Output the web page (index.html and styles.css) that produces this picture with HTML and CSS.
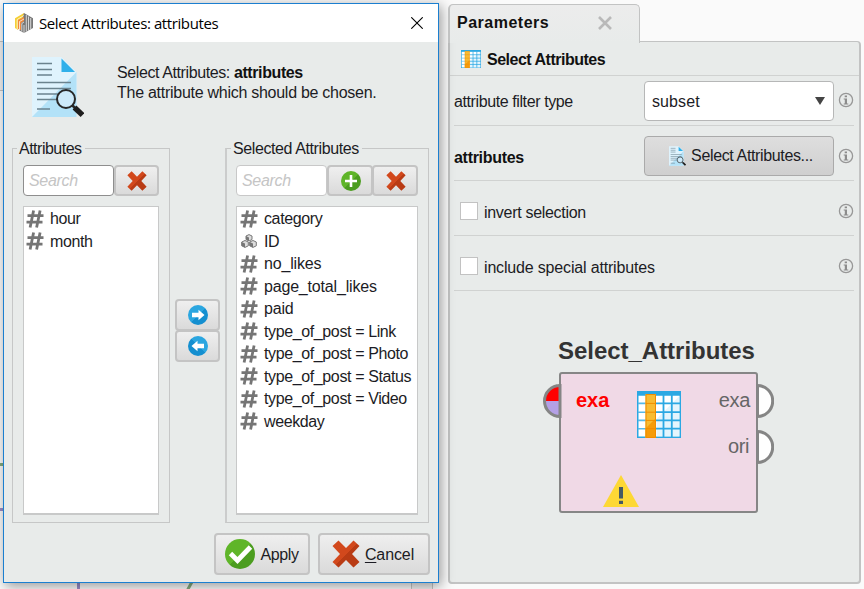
FILE: index.html
```html
<!DOCTYPE html>
<html lang="en">
<head>
<meta charset="utf-8">
<title>Select Attributes</title>
<link rel="stylesheet" href="styles.css">
</head>
<body>
<svg class="defs" width="0" height="0">
  <defs>
    <linearGradient id="red" x1="0" y1="0" x2="1" y2="1"><stop offset=".5" stop-color="#d2481c"/><stop offset=".5" stop-color="#b93b14"/></linearGradient>
    <linearGradient id="green" x1="0" y1="0" x2="1" y2="1"><stop offset=".5" stop-color="#5fb529"/><stop offset=".5" stop-color="#4c9d20"/></linearGradient>
    <linearGradient id="blue" x1="0" y1="0" x2="1" y2="1"><stop offset=".5" stop-color="#2ba6e0"/><stop offset=".5" stop-color="#148fd0"/></linearGradient>
  </defs>
  <symbol id="cross" viewBox="0 0 28 28"><path fill="url(#red)" d="M6.500 .5 14 8 21.500 .5 27.500 6 20 14 27.500 22 21.500 27.500 14 20 6.500 27.500 .5 22 8 14 .5 6Z"/></symbol>
  <symbol id="hash" viewBox="0 0 18 18"><path fill="none" stroke="#757575" stroke-width="2.800" d="M7.600 .5 4.100 17.500M14.100 .5 10.600 17.500M1.500 5.700H17.500M.5 12.200H16.500"/></symbol>
  <symbol id="cubes" viewBox="0 0 16 14"><g fill="#ddd" stroke="#777" stroke-width="1"><path d="M8 .6 11 2v3.500L8 7 5 5.500V2Z"/><path d="M4 6.500 7.300 8v3.800L4 13.400.7 11.800V8Z"/><path d="M12 6.500 15.300 8v3.800L12 13.400 8.700 11.800V8Z"/></g><path fill="#777" d="M5 2 8 3.500V7L5 5.500ZM.7 8 4 9.600v3.800L.7 11.800ZM8.700 8l3.300 1.600v3.800l-3.300-1.600Z"/></symbol>
  <symbol id="doc" viewBox="0 0 52 60">
    <path fill="#dff3fd" d="M0 0H29.500L44.500 15V60H0Z"/><path fill="#b3e2f8" d="M44.500 15V60H0Z"/><path fill="#2fb0ea" d="M29.500 1.500 43 15H29.500Z"/>
    <path stroke="#6b838e" stroke-width="1.700" fill="none" d="M5 6.500H20M5 12.500H20M5 18H20M5 25.500H39M5 31.500H39M5 37H28M5 42.500H25M5 52H18"/>
    <circle cx="34" cy="42" r="9" fill="#cdeafa" stroke="#282828" stroke-width="2"/><path stroke="#282828" stroke-width="2.500" d="m40 48 4 4"/><path stroke="#1e1e1e" stroke-width="5.500" d="m42.500 50.500 8 7.500"/>
  </symbol>
  <symbol id="table" viewBox="0 0 44 47" preserveAspectRatio="none">
    <path fill="#2ba8e3" d="M0 0H44V47H0Z"/>
    <path fill="#fff" d="M1.500 4.800H42.500V45.500H1.500Z"/>
    <path fill="#c9ebfb" opacity=".5" d="M42.500 4.800V45.500H19.500V28Z"/>
    <path stroke="#2ba8e3" stroke-width="1.800" d="M19 12.400H44M19 21.200H44M19 29.400H44M19 37.700H44M26.500 4V46M34.800 4V46"/>
    <path stroke="#56b9e8" stroke-width="1.600" d="M1 12.400H9M1 21.200H9M1 29.400H9M1 37.700H9"/>
    <path fill="#f7bc33" d="M8.500 3H19V47H8.500Z"/><path fill="#f59c0b" d="M19 27V47H8.500V37.500Z"/>
    <path fill="none" stroke="#f08c00" stroke-width="1" d="M9 3.500H18.500V46.500H9ZM9 12.400H19M9 21.200H19M9 29.400H19M9 37.700H19"/>
  </symbol>
  <symbol id="info" viewBox="0 0 16 16"><circle cx="8" cy="8" r="6.600" fill="none" stroke="#979797" stroke-width="1.300"/><path fill="#8c8c8c" d="M6.700 3.400H9V5.300H6.700ZM5.700 6.500H9V11.500H10.300V12.600H5.700V11.500H6.800V7.500H5.700Z"/></symbol>
  <symbol id="arrow" viewBox="0 0 20 20"><circle cx="10" cy="10" r="10" fill="url(#blue)"/><path fill="#fff" d="M4 7.800h6.500V4.800l6 5.200-6 5.200v-3H4Z"/></symbol>
  <symbol id="plus" viewBox="0 0 20 20"><circle cx="10" cy="10" r="10" fill="url(#green)"/><path stroke="#fff" stroke-width="2.600" d="M4 10H16M10 4V16"/></symbol>
  <symbol id="check" viewBox="0 0 30 30"><circle cx="15" cy="15" r="15" fill="url(#green)"/><path fill="none" stroke="#fff" stroke-width="4.800" d="m5.500 14.500 7 7L25.500 8"/></symbol>
  <symbol id="warn" viewBox="0 0 36 32"><path fill="#fdd835" d="M18 0 36 32H0Z"/><path stroke="#455a64" stroke-width="4" d="M18 12V23.500M18 25.800V29"/></symbol>
</svg>

<svg class="backdrop" width="864" height="589">
  <path fill="#f0f0f0" d="M0 42H4V90H0ZM411 582H432V589H411Z"/>
  <path fill="none" stroke="#c4c4c4" stroke-width="1" d="M0 41.500H4M0 90.500H4M411.500 580V589M432.500 580V589"/>
  <path fill="none" stroke="#82a97c" stroke-width="3" d="M0 464.500H4M193 580 187 591"/>
  <path fill="none" stroke="#988cc8" stroke-width="3" d="M0 509.500H4M78.500 580V589"/>
</svg>

<main class="desktop">
  <section class="dialog">
    <header class="titlebar">
      <svg class="logo" viewBox="0 0 18 20"><path fill="#f5cf36" d="M0 5.300 9 0v4L3 8v9L0 15Z"/><path fill="#777" d="M9 0l9 5.300V15l-9 5-5-2.800Z"/><path fill="#f0883a" d="M3 7 9 4v4L6 10v7l-3-1Z"/><path fill="none" stroke="#fff" stroke-width=".7" d="M2.200 16V6.500L9 2.500M4.500 17.500V8.500L9 6M6.800 18.500V10.500L9 9M9 12v8M11.300 2V18.500M13.500 3.500V17.500M15.700 5V16"/></svg>
      <h1>Select Attributes: attributes</h1>
      <svg class="close" viewBox="0 0 12 12"><path stroke="#000" stroke-width="1.100" d="m.3.300 11.400 11.400M11.700.3.300 11.700"/></svg>
    </header>
    <div class="intro">
      <svg width="52" height="60"><use href="#doc"/></svg>
      <p><span class="line l1">Select Attributes: <b>attributes</b></span><span class="line l2">The attribute which should be chosen.</span></p>
    </div>
    <div class="picker">
      <fieldset class="available">
        <legend>Attributes</legend>
        <div class="search"><input class="focus" placeholder="Search"><button><svg width="20" height="20"><use href="#cross"/></svg></button></div>
        <ul>
          <li><svg><use href="#hash"/></svg>hour</li>
          <li><svg><use href="#hash"/></svg>month</li>
        </ul>
      </fieldset>
      <div class="move">
        <button><svg width="20" height="20"><use href="#arrow"/></svg></button>
        <button><svg class="flip" width="20" height="20"><use href="#arrow"/></svg></button>
      </div>
      <fieldset class="selected">
        <legend>Selected Attributes</legend>
        <div class="search"><input placeholder="Search"><button><svg width="20" height="20"><use href="#plus"/></svg></button><button><svg width="20" height="20"><use href="#cross"/></svg></button></div>
        <ul>
          <li><svg><use href="#hash"/></svg>category</li>
          <li><svg class="cubes"><use href="#cubes"/></svg>ID</li>
          <li class="loose"><svg><use href="#hash"/></svg>no_likes</li>
          <li class="loose"><svg><use href="#hash"/></svg>page_total_likes</li>
          <li class="loose"><svg><use href="#hash"/></svg>paid</li>
          <li><svg><use href="#hash"/></svg>type_of_post = Link</li>
          <li><svg><use href="#hash"/></svg>type_of_post = Photo</li>
          <li><svg><use href="#hash"/></svg>type_of_post = Status</li>
          <li><svg><use href="#hash"/></svg>type_of_post = Video</li>
          <li><svg><use href="#hash"/></svg>weekday</li>
        </ul>
      </fieldset>
    </div>
    <footer>
      <button class="apply"><svg width="30" height="30"><use href="#check"/></svg><span>Apply</span></button>
      <button class="cancel"><svg width="28" height="28"><use href="#cross"/></svg><span><u>C</u>ancel</span></button>
    </footer>
  </section>

  <section class="panel">
    <div class="tab"><h2>Parameters</h2><svg width="14" height="14" viewBox="0 0 14 14"><path stroke="#b9b9b9" stroke-width="2.600" d="m1 1 12 12M13 1 1 13"/></svg></div>
    <div class="body">
      <div class="operator-name"><svg width="20" height="18"><use href="#table"/></svg><h3>Select Attributes</h3></div>
      <div class="row first"><label class="filter">attribute filter type</label><div class="combo"><span>subset</span><i></i></div><svg class="info"><use href="#info"/></svg></div>
      <div class="row"><label class="attr"><b>attributes</b></label><button class="choose"><svg width="17" height="20"><use href="#doc"/></svg><span>Select Attributes...</span></button><svg class="info"><use href="#info"/></svg></div>
      <div class="row option"><i class="box"></i><label class="invert">invert selection</label><svg class="info"><use href="#info"/></svg></div>
      <div class="row option"><i class="box"></i><label class="include">include special attributes</label><svg class="info"><use href="#info"/></svg></div>
      <div class="canvas">
        <h4>Select_Attributes</h4>
        <div class="node">
          <svg class="port in" width="19" height="36" viewBox="0 0 19 36"><path fill="#f00" d="M17 2A16 16 0 0 0 1 18H17Z"/><path fill="#b4a0e6" d="M1 18A16 16 0 0 0 17 34V18Z"/><path fill="none" stroke="#858585" stroke-width="3" d="M17 2.500A15.500 15.500 0 0 0 17 33.500M17 1V35"/></svg>
          <svg class="port out one" width="18" height="36" viewBox="0 0 18 36"><path fill="#fff" stroke="#858585" stroke-width="3" d="M1.500 2.500A15.200 15.500 0 0 1 1.500 33.500Z"/></svg>
          <svg class="port out two" width="18" height="36" viewBox="0 0 18 36"><path fill="#fff" stroke="#858585" stroke-width="3" d="M1.500 2.500A15.200 15.500 0 0 1 1.500 33.500Z"/></svg>
          <strong class="exa-in">exa</strong><span class="exa-out">exa</span><span class="ori">ori</span>
          <svg class="glyph" width="44" height="47"><use href="#table"/></svg>
          <svg class="warn" width="36" height="32"><use href="#warn"/></svg>
        </div>
      </div>
    </div>
  </section>
</main>
</body>
</html>
```
FILE: styles.css
```css
* { box-sizing: border-box; margin: 0; padding: 0; }
body { width: 864px; height: 589px; overflow: hidden; background: #fafafa; color: #1c1c24; font: 16px/20px "Liberation Sans", Arial, sans-serif; letter-spacing: -.3px; }
svg { display: block; flex: none; }
.defs, .backdrop { position: absolute; top: 0; left: 0; }
.desktop { position: relative; display: flex; align-items: flex-start; gap: 9px; padding: 3px; }
button { display: flex; align-items: center; justify-content: center; font: inherit; letter-spacing: inherit; color: inherit; border: 2px solid #c4c4c4; border-radius: 4px; background: linear-gradient(#efefef, #dadada); }
label, span, li, legend, h1, h2, h3, h4 { white-space: nowrap; }

.dialog { position: relative; z-index: 1; flex: none; width: 436px; height: 580px; border: 1px solid #1b7fd0; background: #e8ebea; box-shadow: 2px 3px 12px rgba(0,0,0,.4); }
.titlebar { display: flex; align-items: center; height: 38px; padding: 0 15px 1px 11px; background: #fff; }
.logo { width: 18px; height: 20px; }
.titlebar h1 { margin-left: 6px; font: 15px/20px "Open Sans", sans-serif; color: #000; letter-spacing: -.4px; }
.close { width: 12px; height: 12px; margin-left: auto; }
.intro { display: flex; height: 96px; padding: 15px 0 0 28px; }
.intro p { margin: 6px 0 0 33px; }
.line { display: block; height: 20px; letter-spacing: -.27px; }
.l1 { letter-spacing: -.4px; }
.intro b, .attr b { color: #111; }
.picker { display: flex; height: 385px; padding-left: 8px; }
fieldset { min-width: 0; height: 385px; border: 1px solid #c6c7c7; padding: 7px 10px 0; }
.available { width: 158px; }
.selected { width: 204px; border-left: 2px solid #cbcccc; padding-left: 9px; }
legend { margin-left: -6px; padding: 1px 3px 0 2px; line-height: 19px; letter-spacing: -.4px; }
.available legend { letter-spacing: -.5px; }
.selected legend { margin-left: -5px; }
.search { display: flex; height: 31px; }
input { width: 91px; height: 31px; padding: 0 5px; border: 1px solid #c8c8c8; border-radius: 4px; background: #fff; font: italic 16px "Liberation Sans", sans-serif; letter-spacing: -.3px; }
input.focus { border-color: #8e8e8e; }
input::placeholder { color: #c5c5c5; opacity: 1; }
.search button { flex: none; width: 45px; height: 31px; }
.selected .search button { width: 46px; padding-left: 1px; }
.selected .search button + button { margin-left: -1px; }
ul { width: 136px; height: 309px; margin-top: 10px; padding: 1px 2px; border: 2px solid #c8c9c9; border-width: 1px 1px 2px; background: #fff; list-style: none; }
.selected ul { width: 182px; padding-left: 3px; }
li { display: flex; align-items: center; height: 22.5px; letter-spacing: -.38px; }
li.loose { letter-spacing: -.18px; }
li svg { width: 18px; height: 18px; margin-right: 6px; margin-top: -1px; }
li .cubes { width: 16px; height: 14px; margin-left: 1px; margin-right: 7px; }
.move { width: 55px; padding: 161px 0 0 5px; }
.move button { width: 45px; height: 32px; margin-bottom: -1px; }
.flip { transform: scaleX(-1); }
footer { display: flex; gap: 8px; padding: 10px 0 0 210px; }
footer button { height: 42px; gap: 5px; }
.apply { width: 96px; }
.apply span { padding-top: 1px; letter-spacing: -.4px; }
.cancel { width: 112px; padding-right: 2px; }
.cancel span { padding-top: 1px; letter-spacing: -.1px; }
.apply svg, .cancel svg { margin-top: -1px; }
u { text-underline-offset: 2px; }

.panel { width: 413px; margin-top: 1px; }
.tab { position: relative; z-index: 1; display: flex; align-items: center; justify-content: space-between; width: 192px; height: 39px; padding: 0 27px 2px 7px; border: 2px solid #c2c3c3; border-width: 1px 1px 0 2px; border-radius: 5px 5px 0 0; background: linear-gradient(#ececec, #e8ebea); }
.tab h2 { font: bold 16px/20px "Liberation Sans", sans-serif; letter-spacing: .5px; color: #111; }
.body { width: 413px; height: 543px; margin-top: -2px; border: 2px solid #c2c3c3; border-width: 1px 2px 2px; border-radius: 0 4px 4px 4px; background: #e8ebea; }
.operator-name { display: flex; align-items: center; gap: 6px; height: 34px; padding-left: 11px; border-bottom: 1px solid #d0d2d1; }
h3 { padding-top: 2px; font: bold 16px/20px "Liberation Sans", sans-serif; letter-spacing: -.5px; color: #111; }
.row { display: flex; align-items: center; height: 55px; margin: 0 5px 0 4px; padding-top: 6px; border-bottom: 1px solid #d0d2d1; }
.row.first { height: 50px; padding-top: 0; }
.filter { padding-top: 3px; letter-spacing: -.4px; }
.attr, .invert, .include { padding-top: 3px; }
.include { letter-spacing: -.17px; }
.combo { display: flex; align-items: center; justify-content: space-between; width: 190px; height: 40px; margin-left: auto; padding: 1px 7px; border: 1px solid #b6b7b7; border-radius: 4px; background: #fff; letter-spacing: .1px; }
.combo span { padding-top: 3px; }
.combo i { width: 10px; margin-right: 1px; border: 5px solid transparent; border-top: 8px solid #444; border-bottom: 0; }
.choose { width: 190px; height: 40px; margin-left: auto; padding-left: 4px; gap: 5px; border: 1px solid #aaa; background: linear-gradient(#dedede, #cfcfcf); letter-spacing: -.36px; }
.info { width: 16px; height: 16px; margin: -1px 0 0 4px; }
.option .info { margin-left: auto; }
.option .box { width: 18px; height: 18px; margin: 0 6px; border: 1px solid #c2c2c2; background: #fff; }
.canvas { padding: 46px 0 0 109px; }
h4 { width: 199px; height: 35px; margin-left: -1px; font: bold 24px/28px "Liberation Sans", sans-serif; letter-spacing: -.03px; color: #333; }
.node { position: relative; width: 199px; height: 141px; border: 2px solid #868686; border-radius: 3px; background: #f0d9e6; font-size: 20px; }
.node > * { position: absolute; }
.port { top: 9px; }
.in { left: -18px; }
.out { left: 195px; }
.two { top: 55px; }
.exa-in { left: 15px; top: 16px; color: #f00; letter-spacing: 0; }
.exa-out { right: 6px; top: 16px; color: #666; }
.ori { right: 7px; top: 62px; color: #666; letter-spacing: -.4px; }
.glyph { left: 76px; top: 17px; }
.warn { left: 42px; top: 101px; }
```
